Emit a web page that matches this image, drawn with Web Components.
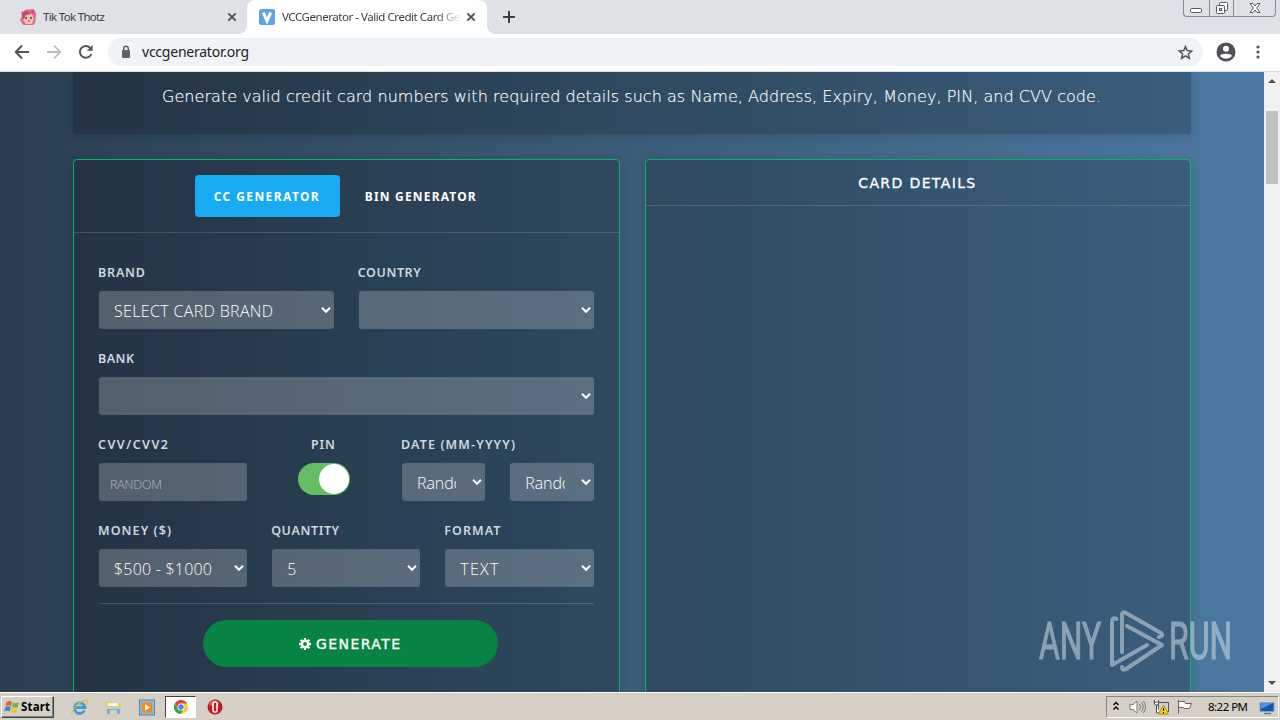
<!DOCTYPE html>
<html lang="en">
<head>
<meta charset="utf-8">
<title>VCCGenerator - Valid Credit Card Generator</title>
<style>
  body {
    margin: 0;
    width: 1280px;
    height: 720px;
    overflow: hidden;
    font-family: "DejaVu Sans", sans-serif;
  }
</style>
</head>
<body>
<desktop-screen></desktop-screen>

<script>
class BaseElement extends HTMLElement {
  constructor() {
    super();
    this.attachShadow({ mode: "open" });
  }

  connectedCallback() {
    this.shadowRoot.innerHTML = this.template();
    this.ready();
  }

  template() {
    return "";
  }

  ready() {}
}

// Single line of text whose tracking is adjusted to fill the width attribute
class FitText extends BaseElement {
  template() {
    return `
      <style>
        :host { display: block; white-space: nowrap; flex: none; text-align: left; }
        span { display: inline-block; }
      </style>
      <span><slot></slot></span>
    `;
  }

  ready() {
    const width = Number(this.getAttribute("width"));
    const span = this.shadowRoot.querySelector("span");
    this.style.width = width + "px";
    const natural = span.getBoundingClientRect().width;
    const gaps = this.textContent.length - 1;
    if (gaps > 0 && natural > 0) {
      span.style.letterSpacing = (width - natural) / gaps + "px";
    }
  }
}

class BrowserTab extends BaseElement {
  template() {
    const active = this.hasAttribute("active");
    return `
      <style>
        :host {
          display: flex;
          align-items: center;
          box-sizing: border-box;
          position: relative;
          width: 240px;
          height: 34px;
          padding: 0 9px 0 12px;
          font: 11.5px "Noto Sans", sans-serif;
          color: #3c4043;
        }
        :host([active]) { background: #fff; border-radius: 8px 8px 0 0; }
        .icon { width: 16px; height: 16px; margin-right: 7px; display: flex; }
        .title { flex: 1; margin-top: -1px; overflow: hidden; white-space: nowrap; }
        :host([active]) .title {
          -webkit-mask-image: linear-gradient(to right, #000 155px, transparent 178px);
          mask-image: linear-gradient(to right, #000 155px, transparent 178px);
        }
        .foot { position: absolute; bottom: 0; width: 8px; height: 8px; }
        .left { left: -8px; background: radial-gradient(circle at 0 0, transparent 7.5px, #fff 8px); }
        .right { right: -8px; background: radial-gradient(circle at 100% 0, transparent 7.5px, #fff 8px); }
      </style>
      ${active ? '<i class="foot left"></i><i class="foot right"></i>' : ""}
      <div class="icon"><slot name="icon"></slot></div>
      <div class="title"><slot></slot></div>
      <svg width="14" height="14" viewBox="0 0 14 14" stroke="#4a4d51" stroke-width="1.8"><path d="M3.3 3.3l7.4 7.4M10.7 3.3l-7.4 7.4"/></svg>
    `;
  }
}

class WindowControls extends BaseElement {
  template() {
    return `
      <style>
        :host {
          display: flex;
          width: 91px;
          height: 16px;
          border: 1px solid #858a94;
          border-top: 0;
          border-radius: 0 0 4px 4px;
          margin-right: 4px;
        }
        div { display: flex; justify-content: center; }
        div + div { border-left: 1px solid #858a94; }
        svg { fill: #fff; stroke: #555962; }
      </style>
      <div style="width:25px"><svg width="14" height="16"><rect x="1.5" y="8.5" width="11" height="4" rx="1"/></svg></div>
      <div style="width:24px"><svg width="14" height="16"><rect x="4.5" y="2.5" width="8" height="8" rx="1"/><rect x="1.5" y="5.5" width="8" height="8" rx="1"/><rect x="4.5" y="8.5" width="2" height="2"/></svg></div>
      <div style="width:41px"><svg width="14" height="16"><path d="M2 3.5h3L7 6l2-2.5h3L8.7 8l3.3 4.5H9L7 10l-2 2.5H2L5.3 8z"/></svg></div>
    `;
  }
}

class TabStrip extends BaseElement {
  template() {
    return `
      <style>
        :host { display: flex; height: 34px; background: #dee1e6; padding-left: 8px; }
        browser-tab + browser-tab { margin-left: -1px; }
        .plus { margin: 8px 0 0 13px; }
        .spacer { flex: 1; }
      </style>
      <browser-tab>
        <svg slot="icon" width="16" height="16" viewBox="0 0 16 16">
          <path d="M1 3l3-1 2-1.5h5L14 0l2 4-.5 9-2 3H3L0 11l2-4z" fill="#df6a8b"/>
          <path d="M4 7l3-3 5 1 2 5-2 5H6l-3-4z" fill="#f3bfae"/>
          <path d="M2 4l5-2 4 3-5 1-3 5zM11 1l3 1-1 3z" fill="#b94c72"/>
          <path d="M5 9h2M10 9h2" stroke="#5b2b4b" stroke-width="1.5"/>
          <path d="M8 12h2" stroke="#c93556"/>
        </svg>
        <fit-text width="62">Tik Tok Thotz</fit-text>
      </browser-tab>
      <browser-tab active>
        <svg slot="icon" width="16" height="16" viewBox="0 0 16 16">
          <rect width="16" height="16" rx="2.5" fill="#5ea3e6"/>
          <path d="M4.3 3.5L8 12l3.7-8.5" fill="none" stroke="#fff" stroke-width="3"/>
        </svg>
        <fit-text width="191">VCCGenerator - Valid Credit Card Gene</fit-text>
      </browser-tab>
      <svg class="plus" width="18" height="18" stroke="#3c4043" stroke-width="2"><path d="M9 3v12M3 9h12"/></svg>
      <div class="spacer"></div>
      <window-controls></window-controls>
    `;
  }
}

class AddressToolbar extends BaseElement {
  template() {
    return `
      <style>
        :host {
          display: flex;
          align-items: center;
          box-sizing: border-box;
          height: 38px;
          padding: 0 13px 1px 13px;
          background: #fff;
          border-bottom: 1px solid #d5dce2;
        }
        svg { display: block; flex: none; }
        .nav { display: flex; gap: 14px; margin-right: 13px; }
        .omnibox {
          display: flex;
          align-items: center;
          box-sizing: border-box;
          width: 1095px;
          height: 28px;
          padding: 0 9px 0 12px;
          border-radius: 14px;
          background: #f0f3f5;
          font: 14px "Noto Sans", sans-serif;
          color: #202124;
        }
        .url { flex: 1; margin: -1px 0 0 10px; }
        .user { margin: 0 16px 0 13px; }
      </style>
      <div class="nav">
        <svg width="18" height="18" viewBox="0 0 18 18" fill="none" stroke="#505357" stroke-width="2"><path d="M16 9H3M9 2.5L2.8 9 9 15.5"/></svg>
        <svg width="18" height="18" viewBox="0 0 18 18" fill="none" stroke="#b9bbbe" stroke-width="1.8"><path d="M2 9h13M9 2.5L15.2 9 9 15.5"/></svg>
        <svg width="18" height="18" viewBox="0 0 18 18" fill="none" stroke="#505357" stroke-width="2"><path d="M14.3 11A5.9 5.9 0 1 1 13.2 4.9"/><path d="M15.6 2v5.7H9.9z" fill="#505357" stroke="none"/></svg>
      </div>
      <div class="omnibox">
        <svg width="12" height="14" viewBox="0 0 12 14"><path d="M3.7 6V3.5a2.3 2.3 0 0 1 4.6 0V6" fill="none" stroke="#5f6368" stroke-width="1.5"/><rect x="2" y="5" width="8" height="8" rx="1" fill="#5f6368"/></svg>
        <div class="url"><fit-text width="107">vccgenerator.org</fit-text></div>
        <svg width="17" height="17" viewBox="0 0 17 17" fill="none" stroke="#505357" stroke-width="1.5"><path d="M8.5 2.5l1.7 4.1 4.5.4-3.4 2.9 1.1 4.4-3.9-2.4-3.9 2.4 1.1-4.4-3.4-2.9 4.5-.4z"/></svg>
      </div>
      <svg class="user" width="20" height="20" viewBox="0 0 20 20"><circle cx="10" cy="10" r="9.5" fill="#4f5256"/><circle cx="10" cy="6.8" r="3" fill="#fff"/><path d="M4 14c1-3 11-3 12 0-2.5 3.4-9.5 3.4-12 0z" fill="#fff"/></svg>
      <svg width="12" height="18" viewBox="0 0 12 18" fill="#505357"><circle cx="6" cy="4" r="1.6"/><circle cx="6" cy="9" r="1.6"/><circle cx="6" cy="14" r="1.6"/></svg>
    `;
  }
}

class SelectBox extends BaseElement {
  template() {
    return `
      <style>
        :host {
          display: flex;
          align-items: center;
          box-sizing: border-box;
          height: 38px;
          min-width: 0;
          padding: 0 3px 0 15px;
          border-radius: 3px;
          background: rgba(255, 255, 255, 0.22);
          font: 300 16px "Open Sans", sans-serif;
          color: #fff;
        }
        .value { flex: 1; min-width: 0; overflow: hidden; margin: 2px 16px 0 0; }
        svg { flex: none; }
      </style>
      <div class="value"><slot></slot></div>
      <svg width="10" height="8" viewBox="0 0 10 8" fill="none" stroke="#fff" stroke-width="2"><path d="M1 1.8l4 4 4-4"/></svg>
    `;
  }
}

class RandomInput extends BaseElement {
  template() {
    return `
      <style>
        :host {
          display: flex;
          align-items: center;
          box-sizing: border-box;
          height: 38px;
          padding: 5px 11px 0;
          border-radius: 3px;
          background: rgba(255, 255, 255, 0.22);
          font: 300 12.5px "Open Sans", sans-serif;
          color: #b2bac2;
        }
      </style>
      <slot></slot>
    `;
  }
}

class ToggleSwitch extends BaseElement {
  template() {
    return `
      <style>
        :host {
          display: flex;
          justify-content: flex-end;
          box-sizing: border-box;
          width: 52px;
          height: 32px;
          margin-right: 1px;
          padding: 1px;
          border-radius: 16px;
          background: #64bd63;
        }
        i { width: 30px; height: 30px; border-radius: 50%; background: #fff; }
      </style>
      <i></i>
    `;
  }
}

class FormField extends BaseElement {
  template() {
    return `
      <style>
        :host { display: flex; flex-direction: column; height: 67px; min-width: 0; }
        :host([centered]) { align-items: center; }
        .label {
          box-sizing: border-box;
          height: 29px;
          padding-top: 1px;
          margin-left: -1px;
          line-height: 20px;
          font-family: "Noto Sans", sans-serif;
          font-size: 12.5px;
          font-weight: 600;
          color: #cfd8df;
        }
        :host([centered]) .label { margin-right: 2px; }
      </style>
      <div class="label"><fit-text width="${this.getAttribute("label-width")}">${this.getAttribute("label")}</fit-text></div>
      <slot></slot>
    `;
  }
}

class PanelCard extends BaseElement {
  template() {
    return `
      <style>
        :host {
          display: block;
          box-sizing: border-box;
          height: 620px;
          border: 1px solid #06b560;
          border-radius: 4px;
          background: rgba(0, 0, 0, 0.2);
          background-clip: padding-box;
          box-shadow: 0 2px 10px rgba(0, 0, 0, 0.12);
        }
        header {
          display: flex;
          justify-content: center;
          align-items: center;
          box-sizing: border-box;
          height: var(--header-height, 46px);
          border-bottom: 1px solid rgba(255, 255, 255, 0.15);
          color: #fff;
        }
      </style>
      <header><slot name="header"></slot></header>
      <slot></slot>
    `;
  }
}

class GeneratorForm extends BaseElement {
  template() {
    return `
      <style>
        :host { display: block; padding: 29px 25px 0; }
        .row { display: grid; column-gap: 25px; margin-bottom: 19px; }
        .half { grid-template-columns: 1fr 1fr; }
        .third { grid-template-columns: 1fr 1fr 1fr; }
        .mixed { grid-template-columns: 148px 105px 1fr; }
        .dates { display: grid; grid-template-columns: minmax(0, 1fr) minmax(0, 1fr); gap: 25px; }
        hr { height: 1px; margin: -3px 0 16px; border: 0; background: rgba(255, 255, 255, 0.15); }
        button {
          display: flex;
          align-items: center;
          justify-content: center;
          gap: 5px;
          width: 295px;
          height: 47px;
          margin: 0 auto 0 104px;
          padding: 1px 2px 0 0;
          border: 0;
          border-radius: 24px;
          background: #078344;
          color: #fff;
          font: 14px "DejaVu Sans", sans-serif;
          -webkit-text-stroke: 0.3px #fff;
        }
      </style>
      <div class="row half">
        <form-field label="BRAND" label-width="47"><select-box><fit-text width="159">SELECT CARD BRAND</fit-text></select-box></form-field>
        <form-field label="COUNTRY" label-width="63"><select-box></select-box></form-field>
      </div>
      <div class="row">
        <form-field label="BANK" label-width="36"><select-box></select-box></form-field>
      </div>
      <div class="row mixed">
        <form-field label="CVV/CVV2" label-width="70"><random-input><fit-text width="52">RANDOM</fit-text></random-input></form-field>
        <form-field label="PIN" label-width="24" centered><toggle-switch></toggle-switch></form-field>
        <form-field label="DATE (MM-YYYY)" label-width="114">
          <div class="dates">
            <select-box><fit-text width="60">Random</fit-text></select-box>
            <select-box><fit-text width="60">Random</fit-text></select-box>
          </div>
        </form-field>
      </div>
      <div class="row third">
        <form-field label="MONEY ($)" label-width="73"><select-box><fit-text width="98">$500 - $1000</fit-text></select-box></form-field>
        <form-field label="QUANTITY" label-width="68"><select-box>5</select-box></form-field>
        <form-field label="FORMAT" label-width="56"><select-box><fit-text width="38">TEXT</fit-text></select-box></form-field>
      </div>
      <hr>
      <button>
        <svg width="12" height="12" viewBox="0 0 12 12" fill="none" stroke="#fff"><circle cx="6" cy="6" r="3.1" stroke-width="2.4"/><path d="M6 0v2M6 10v2M0 6h2M10 6h2M1.7 1.7l1.5 1.5M8.8 8.8l1.5 1.5M10.3 1.7L8.8 3.2M3.2 8.8l-1.5 1.5" stroke-width="2.3"/></svg>
        <fit-text width="84">GENERATE</fit-text>
      </button>
    `;
  }
}

class ScrollBar extends BaseElement {
  template() {
    return `
      <style>
        :host { display: flex; flex-direction: column; align-items: center; width: 16px; background: #f1f1f1; }
        .arrow { height: 16px; width: 16px; }
        .thumb { width: 12px; height: 73px; margin-top: 23px; background: #c1c1c1; }
        .gap { flex: 1; }
      </style>
      <svg class="arrow" viewBox="0 0 16 16"><path d="M4 11l4-4 4 4z" fill="#505050"/></svg>
      <div class="thumb"></div>
      <div class="gap"></div>
      <svg class="arrow" viewBox="0 0 16 16"><path d="M4 5l4 4 4-4z" fill="#505050"/></svg>
    `;
  }
}

class WatermarkLogo extends BaseElement {
  template() {
    return `
      <style>
        :host { position: absolute; left: 1036px; top: 536px; opacity: 0.52; }
        text { font-family: "Roboto", sans-serif; font-size: 52px; fill: #d6e2ec; stroke: #d6e2ec; stroke-width: 1.2px; }
      </style>
      <svg width="200" height="70" viewBox="0 0 200 70">
        <text transform="translate(3 51) scale(0.58 1)" textLength="107" lengthAdjust="spacingAndGlyphs">ANY</text>
        <text transform="translate(133 51) scale(0.58 1)" textLength="109" lengthAdjust="spacingAndGlyphs">RUN</text>
        <g fill="none" stroke="#d6e2ec" stroke-width="4" stroke-linecap="round" stroke-linejoin="round">
          <path d="M80.5 11q-4.500-2-4.500 2v44l35-20"/>
          <path d="M86 44V7q0-4 4-2l35 20q3 3-2 4"/>
          <path d="M91 18l35 19-36 24q-4 2-4-2"/>
        </g>
      </svg>
    `;
  }
}

class PageView extends BaseElement {
  template() {
    return `
      <style>
        :host { display: flex; height: 620px; overflow: hidden; position: relative; }
        main {
          flex: 1;
          padding: 0 73px;
          background: linear-gradient(to right, #2b3e50, #4b79a1);
        }
        .intro {
          display: flex;
          align-items: center;
          justify-content: center;
          box-sizing: border-box;
          height: 62px;
          padding: 0 1px 14px 0;
          border-radius: 0 0 4px 4px;
          background: rgba(0, 0, 0, 0.2);
          box-shadow: 0 2px 10px rgba(0, 0, 0, 0.12);
          font: 200 16px "DejaVu Sans", sans-serif;
          -webkit-text-stroke: 0.15px #fff;
          color: #fff;
        }
        .columns { display: grid; grid-template-columns: 1fr 1fr; gap: 25px; margin-top: 25px; }
        .form { --header-height: 73px; }
        .tabs { display: flex; align-items: center; gap: 25px; margin-right: 22px; font: bold 12px "Noto Sans", sans-serif; }
        .active {
          display: flex;
          align-items: center;
          justify-content: center;
          box-sizing: border-box;
          width: 145px;
          height: 42px;
          padding-right: 2px;
          border-radius: 4px;
          background: #18abf2;
        }
        .details { margin-right: 2px; font: 14px "DejaVu Sans", sans-serif; -webkit-text-stroke: 0.3px #fff; }
      </style>
      <main>
        <div class="intro"><fit-text width="939">Generate valid credit card numbers with required details such as Name, Address, Expiry, Money, PIN, and CVV code.</fit-text></div>
        <div class="columns">
          <panel-card class="form">
            <div slot="header" class="tabs">
              <div class="active"><fit-text width="105">CC GENERATOR</fit-text></div>
              <fit-text width="111">BIN GENERATOR</fit-text>
            </div>
            <generator-form></generator-form>
          </panel-card>
          <panel-card>
            <fit-text slot="header" class="details" width="117">CARD DETAILS</fit-text>
          </panel-card>
        </div>
      </main>
      <scroll-bar></scroll-bar>
      <watermark-logo></watermark-logo>
    `;
  }
}

class TaskBar extends BaseElement {
  template() {
    return `
      <style>
        :host {
          display: flex;
          align-items: center;
          box-sizing: border-box;
          height: 28px;
          padding: 3px 1px 2px 1px;
          border-top: 1px solid #fff;
          background: #d5cfc6;
        }
        svg { display: block; flex: none; }
        .start {
          display: flex;
          align-items: center;
          gap: 1px;
          box-sizing: border-box;
          width: 53px;
          height: 22px;
          padding-left: 2px;
          border: 1px solid;
          border-color: #fff #404040 #404040 #fff;
          box-shadow: inset -1px -1px #878580;
          font: bold 11.5px "Noto Sans", sans-serif;
          color: #000;
        }
        .start fit-text { margin-top: -1px; }
        .apps { display: flex; align-items: center; gap: 17px; margin-left: 17px; }
        .running {
          display: flex;
          align-items: center;
          justify-content: center;
          box-sizing: border-box;
          width: 31px;
          height: 22px;
          margin: 0 -6px 0 -7px;
          background: #fff;
          border: 1px solid;
          border-color: #404040 #fff #fff #404040;
        }
        .spacer { flex: 1; }
        .tray {
          display: flex;
          align-items: center;
          box-sizing: border-box;
          width: 173px;
          height: 22px;
          padding: 0 2px 0 5px;
          border: 1px solid;
          border-color: #87837d #fff #fff #87837d;
          font: 11.5px "Noto Sans", sans-serif;
          color: #000;
        }
        .clock { margin: -1px 11px 0 15px; }
      </style>
      <div class="start">
        <svg width="16" height="16" viewBox="0 0 16 16"><path d="M2.5 3q3-2 5.5 0L7 7.2Q4.5 5.5 1.5 7z" fill="#e8602c"/><path d="M9 3.4q3 1.5 6 0L13.7 8q-2.7 1.3-5.6-.3z" fill="#73b43c"/><path d="M1.3 8q3-1.5 5.5.2L5.7 12.5Q3 11 .2 12.5z" fill="#3d86d0"/><path d="M7.8 8.7q2.7 1.6 5.7.2l-1.2 4.4q-3 1.4-5.7-.2z" fill="#f4bd28"/></svg>
        <fit-text width="29">Start</fit-text>
      </div>
      <div class="apps">
        <svg width="17" height="17" viewBox="0 0 17 17" fill="none"><path d="M13.5 11.5A5.3 5.3 0 1 1 14 8.5H5" stroke="#3c9edb" stroke-width="2.8"/><path d="M1 15C-1 11 12-1 16 2c1 .6 0 3-1 4" stroke="#e9bd3a" stroke-width="1.3"/></svg>
        <svg width="17" height="17" viewBox="0 0 17 17"><path d="M1 3l5-1 1 2h9v8H1z" fill="#e6cb6c"/><path d="M3 4h10v3H3z" fill="#fff7c9"/><path d="M2 8h13v7h-3v-4H5v4H2z" fill="#6fb4d4"/><path d="M2 8h13v2H2z" fill="#a4d6e8"/></svg>
        <svg width="16" height="17" viewBox="0 0 17 17"><rect x=".5" y=".5" width="16" height="16" fill="#8db9d9" stroke="#5782a8"/><rect x="3" y="3" width="11" height="11" rx="3" fill="#f28a1d"/><path d="M6.5 5v7l5-3.5z" fill="#fff"/></svg>
        <div class="running">
          <svg width="16" height="16" viewBox="0 0 16 16"><circle cx="8" cy="8" r="7" fill="#f7ca35"/><path d="M1.9 4.5A7 7 0 0 1 14.1 4.5H8L5 9.8z" fill="#dd493c"/><path d="M1.9 4.5A7 7 0 0 0 7.5 15l3-5.3L5 9.7z" fill="#3aa057"/><circle cx="8" cy="8" r="3.5" fill="#fff"/><circle cx="8" cy="8" r="2.7" fill="#4285ea"/></svg>
        </div>
        <svg width="16" height="16" viewBox="0 0 16 16"><circle cx="8" cy="8" r="7.5" fill="#be1d20"/><ellipse cx="7" cy="4.5" rx="5" ry="3" fill="#dc5a50"/><rect x="6" y="3" width="4" height="10" rx="1.5" fill="#bd2022" stroke="#fff" stroke-width="1.5"/></svg>
      </div>
      <div class="spacer"></div>
      <div class="tray">
        <svg width="8" height="12" viewBox="0 0 8 12" fill="none" stroke="#000" stroke-width="1.4"><path d="M1.5 4L4 1.5 6.5 4M1.5 8.5L4 6l2.5 2.5"/></svg>
        <svg style="margin-left:9px" width="17" height="16" viewBox="0 0 17 16" fill="#fff" stroke="#777"><path d="M1 5.5h3L8 2v12l-4-3.5H1z"/><path d="M10.5 5q2 3 0 6M12.5 3.5q3.5 4.5 0 9M14.5 2q4 6 0 12" fill="none"/></svg>
        <svg style="margin-left:7px" width="17" height="16" viewBox="0 0 17 16"><rect x="5.5" y="3.5" width="10" height="9" fill="#c7d0d5" stroke="#555"/><path d="M1.5 1v4q0 1 2 1t2-1V1M3.5 6v8H7M1.5 3h4" fill="#fff" stroke="#4b4b4b"/><path d="M10.5 6l5 9h-10z" fill="#ffd51c" stroke="#b88d00"/><path d="M10.5 9v3M10.5 13v1.2" stroke="#000" stroke-width="1.2"/></svg>
        <svg style="margin-left:6px" width="17" height="16" viewBox="0 0 17 16" fill="#fff" stroke="#666"><path d="M2.5 1v14M2.5 2.5h6l1 2h6l-2 5H8.5l-1-1h-5"/></svg>
        <div class="clock"><fit-text width="40">8:22 PM</fit-text></div>
        <svg width="16" height="15" viewBox="0 0 16 15"><path d="M1 2.5h14v9H1z" fill="#1755b1" stroke="#7fa7ce"/><path d="M2 3h12L2 9z" fill="#4c96e3"/><path d="M5 13.5h7" stroke="#667786" stroke-width="1.5"/></svg>
      </div>
    `;
  }
}

class DesktopScreen extends BaseElement {
  template() {
    return `
      <style>
        :host { display: flex; flex-direction: column; width: 1280px; height: 720px; }
      </style>
      <tab-strip></tab-strip>
      <address-toolbar></address-toolbar>
      <page-view></page-view>
      <task-bar></task-bar>
    `;
  }
}

customElements.define("fit-text", FitText);
customElements.define("browser-tab", BrowserTab);
customElements.define("window-controls", WindowControls);
customElements.define("tab-strip", TabStrip);
customElements.define("address-toolbar", AddressToolbar);
customElements.define("select-box", SelectBox);
customElements.define("random-input", RandomInput);
customElements.define("toggle-switch", ToggleSwitch);
customElements.define("form-field", FormField);
customElements.define("panel-card", PanelCard);
customElements.define("generator-form", GeneratorForm);
customElements.define("scroll-bar", ScrollBar);
customElements.define("watermark-logo", WatermarkLogo);
customElements.define("page-view", PageView);
customElements.define("task-bar", TaskBar);
customElements.define("desktop-screen", DesktopScreen);
</script>
</body>
</html>
